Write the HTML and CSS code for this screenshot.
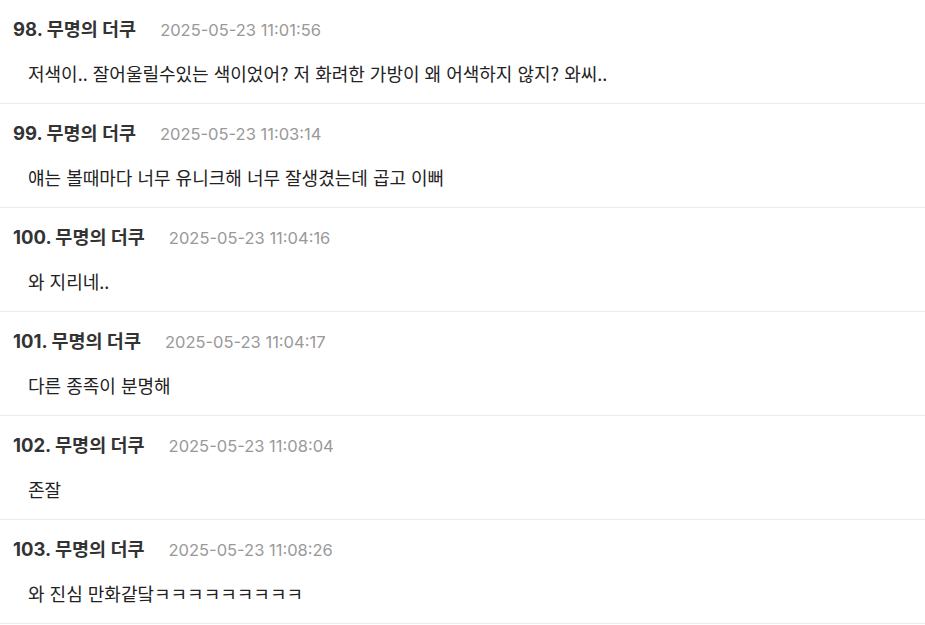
FILE: index.html
```html
<!DOCTYPE html>
<html lang="ko">
<head>
<meta charset="utf-8">
<link rel="stylesheet" href="styles.css">
</head>
<body>
<ul class="comments">
  <li class="comment">
    <div class="meta"><span class="name">98. 무명의 더쿠</span><span class="date">2025-05-23 11:01:56</span></div>
    <p class="text">저색이.. 잘어울릴수있는 색이었어? 저 화려한 가방이 왜 어색하지 않지? 와씨..</p>
  </li>
  <li class="comment">
    <div class="meta"><span class="name">99. 무명의 더쿠</span><span class="date">2025-05-23 11:03:14</span></div>
    <p class="text">얘는 볼때마다 너무 유니크해 너무 잘생겼는데 곱고 이뻐</p>
  </li>
  <li class="comment">
    <div class="meta"><span class="name">100. 무명의 더쿠</span><span class="date">2025-05-23 11:04:16</span></div>
    <p class="text">와 지리네..</p>
  </li>
  <li class="comment">
    <div class="meta"><span class="name">101. 무명의 더쿠</span><span class="date">2025-05-23 11:04:17</span></div>
    <p class="text">다른 종족이 분명해</p>
  </li>
  <li class="comment">
    <div class="meta"><span class="name">102. 무명의 더쿠</span><span class="date">2025-05-23 11:08:04</span></div>
    <p class="text">존잘</p>
  </li>
  <li class="comment">
    <div class="meta"><span class="name">103. 무명의 더쿠</span><span class="date">2025-05-23 11:08:26</span></div>
    <p class="text">와 진심 만화같닼ㅋㅋㅋㅋㅋㅋㅋㅋㅋ</p>
  </li>
</ul>
</body>
</html>
```
FILE: styles.css
```css
html, body {
  margin: 0;
  padding: 0;
  background: #fff;
}
body {
  font-family: Inter, "Noto Sans CJK KR", sans-serif;
  -webkit-font-smoothing: antialiased;
}
.comments {
  list-style: none;
  margin: 0;
  padding: 0;
}
.comment {
  padding: 17px 0 18px 13px;
  border-bottom: 1px solid #ebebeb;
}
.meta {
  display: flex;
  align-items: baseline;
  gap: 24px;
  height: 24px;
  line-height: 24px;
}
.name {
  font-size: 18.5px;
  font-weight: 700;
  color: #333;
}
.date {
  font-size: 16.5px;
  color: #999;
}
.text {
  margin: 20px 0 0 15px;
  font-family: "Noto Sans CJK KR", sans-serif;
  font-size: 18px;
  line-height: 24px;
  color: #222;
}
```
